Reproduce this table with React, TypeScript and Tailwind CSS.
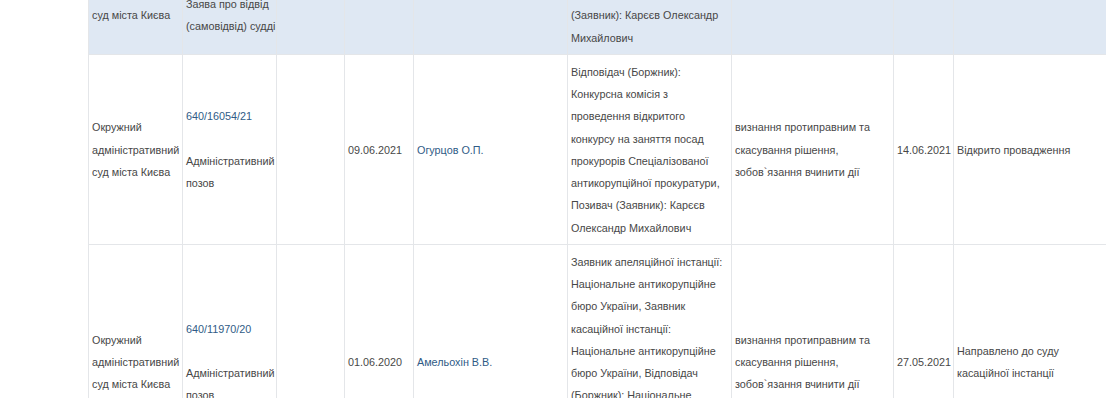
import type { ReactNode } from 'react'

type Row = {
  court: string
  caseNo: string
  caseType: string
  date: string
  judge: string
  parties: ReactNode
  claim: string
  changed: string
  status: string
  striped?: boolean
}

const rows: Row[] = [
  {
    court: 'Окружний адміністративний суд міста Києва',
    caseNo: '640/15872/21',
    caseType: 'Заява про відвід (самовідвід) судді',
    date: '04.06.2021',
    judge: 'Огурцов О.П.',
    parties: (
      <>
        Заінтересована особа:
        <br />
        Огурцов О.П., Відповідач:
        <br />
        Конкурсна комісія, Позивач
        <br />
        (Заявник): Карєєв Олександр
        <br />
        Михайлович
      </>
    ),
    claim: '',
    changed: '07.06.2021',
    status: 'Розглянуто',
    striped: true,
  },
  {
    court: 'Окружний адміністративний суд міста Києва',
    caseNo: '640/16054/21',
    caseType: 'Адміністративний позов',
    date: '09.06.2021',
    judge: 'Огурцов О.П.',
    parties:
      'Відповідач (Боржник): Конкурсна комісія з проведення відкритого конкурсу на заняття посад прокурорів Спеціалізованої антикорупційної прокуратури, Позивач (Заявник): Карєєв Олександр Михайлович',
    claim: 'визнання протиправним та скасування рішення, зобов`язання вчинити дії',
    changed: '14.06.2021',
    status: 'Відкрито провадження',
  },
  {
    court: 'Окружний адміністративний суд міста Києва',
    caseNo: '640/11970/20',
    caseType: 'Адміністративний позов',
    date: '01.06.2020',
    judge: 'Амельохін В.В.',
    parties:
      'Заявник апеляційної інстанції: Національне антикорупційне бюро України, Заявник касаційної інстанції: Національне антикорупційне бюро України, Відповідач (Боржник): Національне антикорупційне бюро України, Позивач (Заявник): Карєєв Олександр Михайлович',
    claim: 'визнання протиправним та скасування рішення, зобов`язання вчинити дії',
    changed: '27.05.2021',
    status: 'Направлено до суду касаційної інстанції',
  },
]

const cell = 'border border-[#e4e6e9] px-[3px] py-[5.5px] align-middle'

export default function App() {
  return (
    <div className="h-[398px] w-[1106px] overflow-hidden bg-white pl-[88px] font-['Liberation_Sans',Arial,sans-serif] text-[10.8px] leading-[22.25px] text-[#474747]">
      <table className="mt-[-69px] w-[1018px] table-fixed border-collapse">
        <colgroup>
          <col className="w-[94px]" />
          <col className="w-[94px]" />
          <col className="w-[68px]" />
          <col className="w-[69px]" />
          <col className="w-[154px]" />
          <col className="w-[164px]" />
          <col className="w-[162px]" />
          <col className="w-[60px]" />
          <col className="w-[153px]" />
        </colgroup>
        <tbody>
          {rows.map((r) => (
            <tr key={r.caseNo} className={r.striped ? 'bg-[#dfe8f3]' : 'bg-white'}>
              <td className={cell}>{r.court}</td>
              <td className={`${cell} pr-0`}>
                <a className="text-[#2f5b86]">{r.caseNo}</a>
                <br />
                <br />
                {r.caseType}
              </td>
              <td className={cell}></td>
              <td className={cell}>{r.date}</td>
              <td className={cell}>
                <a className="text-[#2f5b86]">{r.judge}</a>
              </td>
              <td className={cell}>{r.parties}</td>
              <td className={cell}>{r.claim}</td>
              <td className={cell}>{r.changed}</td>
              <td className={cell}>{r.status}</td>
            </tr>
          ))}
        </tbody>
      </table>
    </div>
  )
}
